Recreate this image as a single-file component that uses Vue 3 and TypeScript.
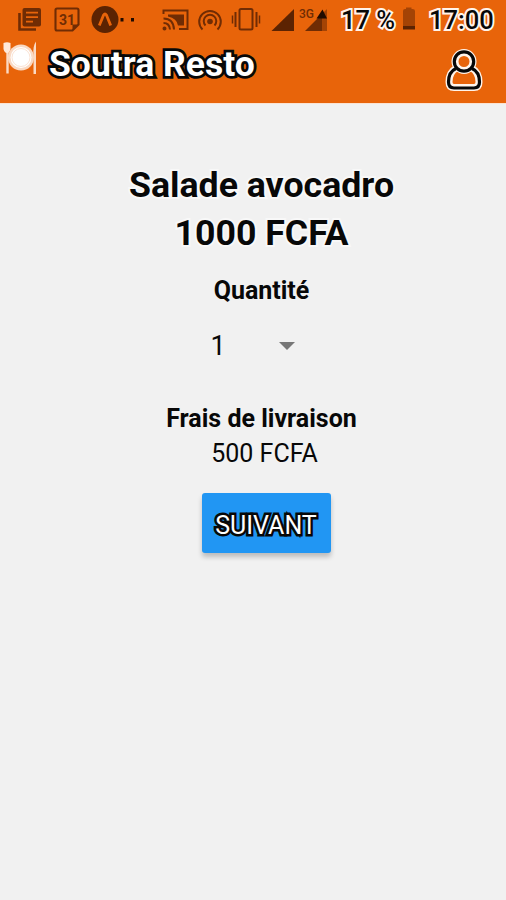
<script setup lang="ts">
import { ref } from 'vue'

interface Dish {
  name: string
  price: number
}

const dish: Dish = { name: 'Salade avocadro', price: 1000 }
const deliveryFee = 500
const quantity = ref<number>(1)
</script>

<template>
  <div class="screen">
    <header class="top">
      <div class="status">
        <svg class="notifications" width="140" height="38" viewBox="0 0 140 38">
          <path d="M19.500 13v16.500H36" fill="none" stroke="#702c04" stroke-width="2.600" />
          <rect x="22.500" y="8" width="18.500" height="18.500" rx="2" fill="#702c04" />
          <path d="M26 12.700h12M26 17.200h12M26 21.700h7" stroke="#e8640a" stroke-width="1.700" />
          <path d="M57 8.500h20q1.500 0 1.500 1.500v14.500l-6 6H57q-1.500 0-1.500-1.500V10q0-1.500 1.500-1.500z" fill="none" stroke="#702c04" stroke-width="2.100" />
          <path d="M72.500 30.500v-6h6z" fill="#702c04" />
          <text x="67" y="24.500" text-anchor="middle" class="day">31</text>
          <circle cx="105" cy="19.500" r="13.500" fill="#5c2302" />
          <path d="M99.300 25.500l4.300-10.500q1.400-2 2.800 0l4.300 10.500" fill="none" stroke="#e8640a" stroke-width="2.800" />
          <rect x="120.500" y="18" width="3" height="3.500" fill="#210b00" />
          <rect x="131" y="18" width="3" height="3.500" fill="#210b00" />
        </svg>
        <svg class="signals" width="170" height="38" viewBox="160 0 170 38">
          <g fill="none" stroke="#702c04" stroke-width="2">
            <path d="M163.500 14v-3.500h24V29H179" />
            <path d="M163.500 18.500q10 0 10.500 11M163.500 23q6 0 6.500 6.500" />
            <circle cx="164.500" cy="28.500" r="1" />
            <path d="M202.500 29.500a10.800 10.800 0 1 1 15 0M205.500 25.500a6.300 6.300 0 1 1 9 0" />
            <rect x="239.500" y="9" width="13" height="20.500" rx="1.500" />
            <path d="M235.500 12v15M256.500 12v15" />
            <path d="M232.500 15.500v8M259.500 15.500v8" stroke-width="1.500" />
          </g>
          <path d="M168 14.500h16v11h-6q-1-7-10-9z" fill="#702c04" />
          <circle cx="210" cy="21.500" r="2.800" fill="#702c04" />
          <path d="M271.500 31L294 9v22z" fill="#5c2302" />
          <path d="M305 31l17-17v17z" fill="#702c04" />
          <path d="M322 14l5-5v22h-5z" fill="#a44305" />
          <path d="M316.500 18.500l6-9 4.500 9z" fill="#210b00" />
          <text x="299" y="18" class="network">3G</text>
        </svg>
        <span class="battery">17 %</span>
        <svg class="cell" width="14" height="38" viewBox="0 0 14 38">
          <path d="M0 11q0-2 2-2h1V7.500h5.500V9h1q2.500 0 2.500 2v15H0z" fill="#a44305" />
          <path d="M0 26h12v3.500H0z" fill="#5c2302" />
        </svg>
        <time class="clock">17:00</time>
      </div>
      <div class="bar">
        <svg class="plate" width="36" height="40" viewBox="0 0 36 40">
          <circle cx="19" cy="19.500" r="13" fill="#f9d9c3" />
          <circle cx="19" cy="19.500" r="10.500" fill="#fff" />
          <circle cx="19" cy="19.500" r="9" fill="#fff" stroke="#fbe3d3" stroke-width="1" />
          <path d="M5.500 12v23.500" fill="none" stroke="#fbdac4" stroke-width="2.400" />
          <path d="M1.500 5q3.500-1.500 7 0v6q-1 4-3.500 4t-3.500-4z" fill="#ffe9da" />
          <path d="M31.500 36V18q-1-10 2.500-14.500V36z" fill="#fbdac4" />
        </svg>
        <h1 class="brand">Soutra Resto</h1>
        <svg class="user" width="40" height="46" viewBox="0 0 40 46">
          <g fill="none" stroke-linejoin="round">
            <g stroke="#fff4eb" stroke-width="7">
              <circle cx="20" cy="13.500" r="9" />
              <path d="M12.500 20C7 23 5 27 5 34q0 5.500 5 5.500h20q5 0 5-5.500c0-7-2-11-7.500-14" />
            </g>
            <g stroke="#080808" stroke-width="3.200">
              <circle cx="20" cy="13.500" r="9.700" />
              <path d="M12 20.500C6.500 23 4.500 27 4.500 34q0 6 5.500 6h20q5.500 0 5.500-6c0-7-2-11-7.500-13.500" />
            </g>
          </g>
        </svg>
      </div>
    </header>

    <main class="order">
      <h2 class="dish">{{ dish.name }}</h2>
      <p class="price">{{ dish.price }} FCFA</p>
      <h3 class="label quantity-label">Quantité</h3>
      <div class="picker" role="listbox">
        <span>{{ quantity }}</span>
        <i class="caret"></i>
      </div>
      <h3 class="label fee-label">Frais de livraison</h3>
      <p class="fee">{{ deliveryFee }} FCFA</p>
      <button class="next" type="button">SUIVANT</button>
    </main>
  </div>
</template>

<style>
body {
  margin: 0;
  background: #f1f1f1;
}
</style>

<style scoped>
.screen {
  width: 506px;
  height: 900px;
  overflow: hidden;
  background: #f1f1f1;
  color: #080808;
  font-family: Roboto, "Liberation Sans", sans-serif;
}

h1, h2, h3, p {
  margin: 0;
  white-space: nowrap;
}

svg {
  display: block;
  flex: none;
}

.top {
  height: 103px;
  background: #e8640a;
  border-bottom: 1px solid #fbe3d2;
}

.status {
  display: flex;
  height: 38px;
}

.signals {
  margin-left: 20px;
}

.day {
  font: 700 14px Roboto, sans-serif;
  fill: #702c04;
}

.network {
  font: 500 12px Roboto, sans-serif;
  fill: #702c04;
}

.battery, .clock {
  font-size: 25.500px;
  font-weight: 500;
  line-height: 41px;
  white-space: nowrap;
  -webkit-text-stroke: 4px #fff4eb;
  paint-order: stroke fill;
}

.battery {
  width: 61px;
  margin-left: 11px;
}

.cell {
  margin-left: 1px;
}

.clock {
  margin-left: 12px;
}

.bar {
  display: flex;
  height: 65px;
}

.plate {
  margin-left: 2px;
}

.brand {
  width: 395px;
  margin-left: 11px;
  color: #fff;
  font-size: 35.500px;
  font-weight: 700;
  line-height: 53px;
  -webkit-text-stroke: 5.500px #080808;
  paint-order: stroke fill;
}

.user {
  margin-top: 10px;
}

.order {
  display: flex;
  flex-direction: column;
  align-items: center;
  width: 523px;
  padding-top: 57px;
}

.dish, .price {
  font-size: 35.700px;
  font-weight: 700;
  line-height: 48px;
  -webkit-text-stroke: 4px #f8f8f8;
  paint-order: stroke fill;
}

.label {
  font-size: 25px;
  font-weight: 700;
  line-height: 34px;
}

.quantity-label {
  margin-top: 17px;
}

.picker {
  display: flex;
  align-items: center;
  justify-content: space-between;
  width: 84px;
  height: 40px;
  margin: 18px 18px 0 0;
  font-size: 27px;
}

.caret {
  border: 8px solid transparent;
  border-top-color: #777;
  border-bottom: 0;
}

.fee-label {
  margin-top: 36px;
}

.fee {
  margin-left: 6px;
  font-size: 25px;
  line-height: 36px;
}

.next {
  width: 129px;
  height: 60px;
  margin: 21px 0 0 9px;
  padding: 4px 0 0;
  border: 0;
  border-radius: 3px;
  background: #2196f3;
  box-shadow: 0 4px 5px rgb(0 0 0 / 22%);
  color: #fff;
  font-family: inherit;
  font-size: 25px;
  -webkit-text-stroke: 5px #080808;
  paint-order: stroke fill;
}
</style>
